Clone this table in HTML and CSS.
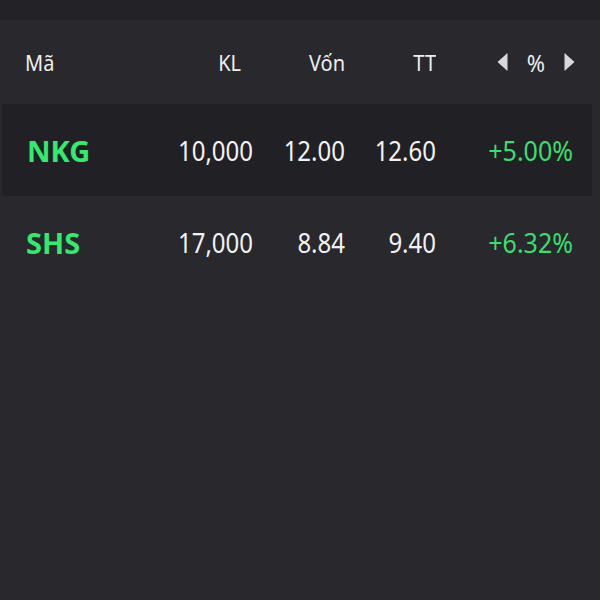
FILE: index.html
```html
<!DOCTYPE html>
<html lang="vi">
<head>
<meta charset="utf-8">
<link rel="stylesheet" href="styles.css">
</head>
<body>
<div class="topbar"></div>
<div class="table">
  <div class="row head">
    <div class="c code">Mã</div>
    <div class="c num kl">KL</div>
    <div class="c num">Vốn</div>
    <div class="c num">TT</div>
    <div class="c pct">
      <svg class="tri" width="11" height="20" viewBox="0 0 11 20"><path d="M10.5 1 L10.5 19 L0.5 10 Z" fill="#d9d9dd"/></svg>
      <span class="pct-sign">%</span>
      <svg class="tri" width="11" height="20" viewBox="0 0 11 20"><path d="M0.5 1 L0.5 19 L10.5 10 Z" fill="#d9d9dd"/></svg>
    </div>
  </div>
  <div class="row item alt">
    <div class="c code">NKG</div>
    <div class="c num">10,000</div>
    <div class="c num">12.00</div>
    <div class="c num">12.60</div>
    <div class="c pct up">+5.00%</div>
  </div>
  <div class="row item">
    <div class="c code">SHS</div>
    <div class="c num">17,000</div>
    <div class="c num">8.84</div>
    <div class="c num">9.40</div>
    <div class="c pct up">+6.32%</div>
  </div>
</div>
</body>
</html>
```
FILE: styles.css
```css
html, body {
  margin: 0;
  padding: 0;
  background: #28282d;
  width: 600px;
  height: 600px;
  overflow: hidden;
  font-family: "Noto Sans", "Open Sans", sans-serif;
  color: #f2f2f4;
}
.topbar {
  height: 20px;
  background: #232327;
}
.row {
  display: grid;
  grid-template-columns: 160px 93px 92px 91px 137px 27px;
  align-items: center;
}
.row::after { content: ""; }
.c {
  white-space: nowrap;
  transform: scaleY(1.1);
}
.code { padding-left: 26px; }
.num { text-align: right; }
.pct { text-align: right; }
.head {
  height: 84px;
  font-size: 20px;
  color: #eeeef0;
}
.head .kl { padding-right: 12px; }
.head .code { padding-left: 25px; }
.head .pct {
  display: flex;
  justify-content: flex-end;
  align-items: center;
  gap: 19px;
  margin-right: -2px;
  transform: none;
}
.pct-sign {
  font-size: 22px;
  transform: scaleY(1.08);
}
.tri { display: block; }
.item {
  height: 92px;
  font-size: 24px;
}
.item .code {
  font-weight: 700;
  font-size: 29px;
  color: #33e96f;
  transform: none;
}
.item .pct { font-size: 25px; }
.alt {
  background: #212125;
  margin: 0 8px 0 2px;
  grid-template-columns: 158px 93px 92px 91px 137px 19px;
}
.alt .code { padding-left: 25px; }
.up { color: #3ade70; }
```
